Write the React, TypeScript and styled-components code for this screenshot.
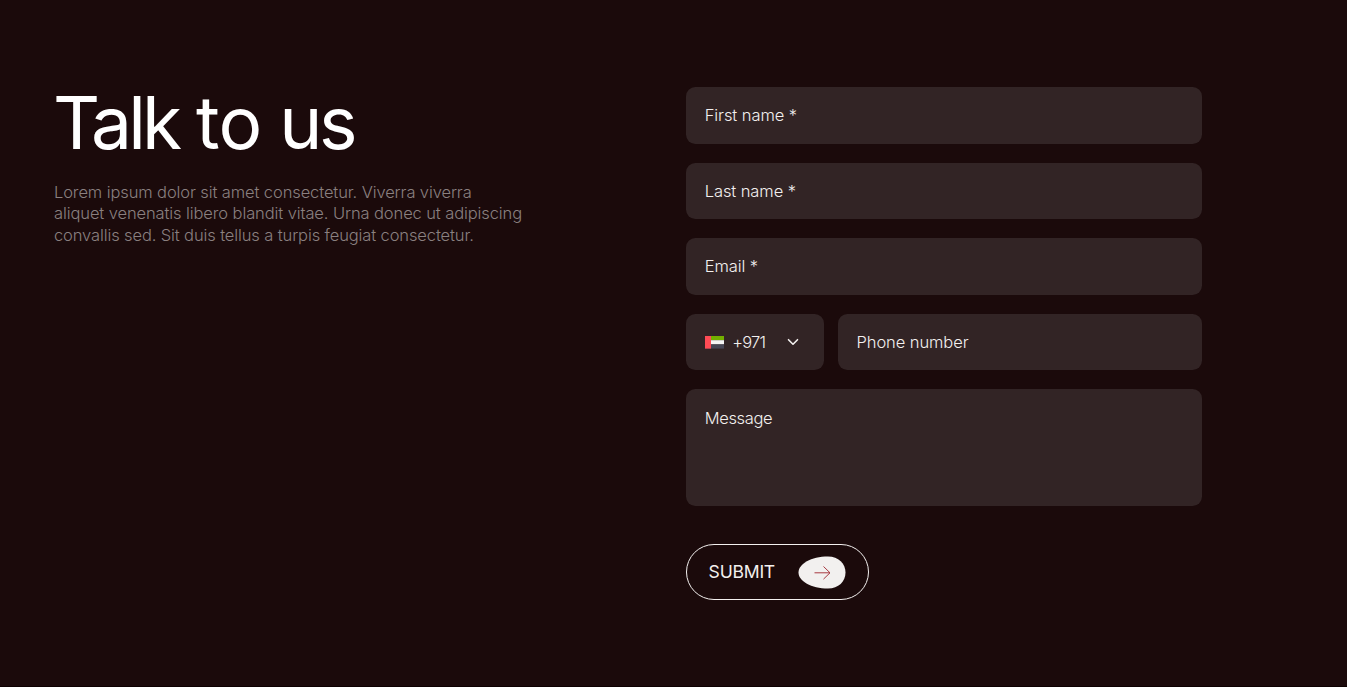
import React from 'react';
import styled, { createGlobalStyle } from 'styled-components';

const GlobalStyle = createGlobalStyle`
  *, *::before, *::after { box-sizing: border-box; }
  html, body { margin: 0; background: #1b0a0b; }
  body { font-family: Inter, "Liberation Sans", sans-serif; overflow: hidden; }
`;

const Page = styled.main`
  display: grid;
  grid-template-columns: 632px 515.6px;
  align-items: start;
  height: 687px;
  padding: 87.3px 0 0 54px;
  background: #1b0a0b;
  border-bottom: 1px solid #0d0001;
`;

const Intro = styled.section`
  display: flex;
  flex-direction: column;
`;

const Title = styled.h1`
  margin: 0 0 0 -1px;
  font-size: 73px;
  font-weight: 440;
  line-height: 72px;
  letter-spacing: -2.95px;
  color: #fff;
  white-space: nowrap;
`;

const Word = styled.span<{ $spacing: number }>`
  letter-spacing: ${({ $spacing }) => $spacing}px;
`;

const Copy = styled.p`
  margin: 22.4px 0 0;
  font-size: 16.5px;
  font-weight: 300;
  line-height: 21.8px;
  color: #8a8080;
`;

const CopyLine = styled.span<{ $spacing: number }>`
  display: block;
  width: max-content;
  letter-spacing: ${({ $spacing }) => $spacing}px;
`;

const Form = styled.form`
  display: flex;
  flex-direction: column;
  gap: 18.9px;
`;

const Field = styled.label<{ $tall?: boolean }>`
  display: flex;
  flex: 1;
  align-items: ${({ $tall }) => ($tall ? 'flex-start' : 'center')};
  min-height: ${({ $tall }) => ($tall ? 117 : 56.6)}px;
  padding: ${({ $tall }) => ($tall ? '18.6px' : '1.4px')} 18.7px 0;
  border-radius: 9.4px;
  background: #322425;
`;

const Label = styled.span<{ $spacing?: number }>`
  font-size: 16.5px;
  font-weight: 300;
  line-height: 21.8px;
  letter-spacing: ${({ $spacing = -0.08 }) => $spacing}px;
  color: #f3f0ef;
  white-space: nowrap;
`;

const PhoneRow = styled.div`
  display: flex;
  gap: 14.2px;
`;

const DialCode = styled.button`
  display: flex;
  align-items: center;
  width: 137.6px;
  height: 56.6px;
  padding: 1px 18.7px 0;
  border: 0;
  border-radius: 9.4px;
  background: #322425;
  font-family: inherit;
`;

const Flag = styled.svg`
  width: 19px;
  height: 12.6px;
  margin-right: 8.6px;
`;

const Chevron = styled.svg`
  width: 12px;
  height: 8px;
  margin: 0 6px 1px auto;
`;

const Submit = styled.button`
  display: flex;
  align-items: center;
  justify-content: space-between;
  width: 183px;
  height: 56.2px;
  margin-top: 18.8px;
  padding: 0 21.6px;
  border: 1px solid #f3f0ef;
  border-radius: 29px;
  background: transparent;
  font-family: inherit;
`;

const SubmitText = styled.span`
  padding-bottom: 0.6px;
  font-size: 17.6px;
  font-weight: 400;
  letter-spacing: -0.25px;
  color: #f3f0ef;
`;

const Drop = styled.svg`
  width: 48px;
  height: 33px;
`;

const copy = [
  { text: 'Lorem ipsum dolor sit amet consectetur. Viverra viverra', spacing: -0.11 },
  { text: 'aliquet venenatis libero blandit vitae. Urna donec ut adipiscing', spacing: -0.105 },
  { text: 'convallis sed. Sit duis tellus a turpis feugiat consectetur.', spacing: -0.12 },
];

export default function App() {
  return (
    <>
      <GlobalStyle />
      <Page>
        <Intro>
          <Title>
            <Word $spacing={-3.8}>Talk</Word> <Word $spacing={-0.6}>to</Word> <Word $spacing={-3.4}>us</Word>
          </Title>
          <Copy>
            {copy.map((line) => (
              <CopyLine key={line.text} $spacing={line.spacing}>{line.text}</CopyLine>
            ))}
          </Copy>
        </Intro>
        <Form>
          <Field><Label>First name *</Label></Field>
          <Field><Label>Last name *</Label></Field>
          <Field><Label>Email *</Label></Field>
          <PhoneRow>
            <DialCode type="button">
              <Flag viewBox="0 0 19 12.6">
                <rect width="19" height="4.2" fill="#73af00" />
                <rect y="4.2" width="19" height="4.2" fill="#f5f5f5" />
                <rect y="8.4" width="19" height="4.2" fill="#464655" />
                <rect width="6" height="12.6" fill="#ff4b55" />
              </Flag>
              <Label $spacing={-0.8}>+971</Label>
              <Chevron viewBox="0 0 12 8" fill="none" stroke="#f3f0ef" strokeWidth="1.6" strokeLinecap="round" strokeLinejoin="round">
                <path d="M1.5 1.7 6 6.2l4.5-4.5" />
              </Chevron>
            </DialCode>
            <Field><Label>Phone number</Label></Field>
          </PhoneRow>
          <Field $tall><Label $spacing={-0.35}>Message</Label></Field>
          <Submit type="button">
            <SubmitText>SUBMIT</SubmitText>
            <Drop viewBox="0 0 48 33" fill="none">
              <path d="M0.5 16.5C0.5 8 13 0.5 30 0.5C40.5 0.5 47.5 7.5 47.5 16.5S40.5 32.5 30 32.5C13 32.5 0.5 25 0.5 16.5Z" fill="#f2f0ef" />
              <path d="M16.5 16.8H32M25.5 10.5l6.5 6.3-6.5 6.3" stroke="#a83a42" strokeWidth="1" />
            </Drop>
          </Submit>
        </Form>
      </Page>
    </>
  );
}
